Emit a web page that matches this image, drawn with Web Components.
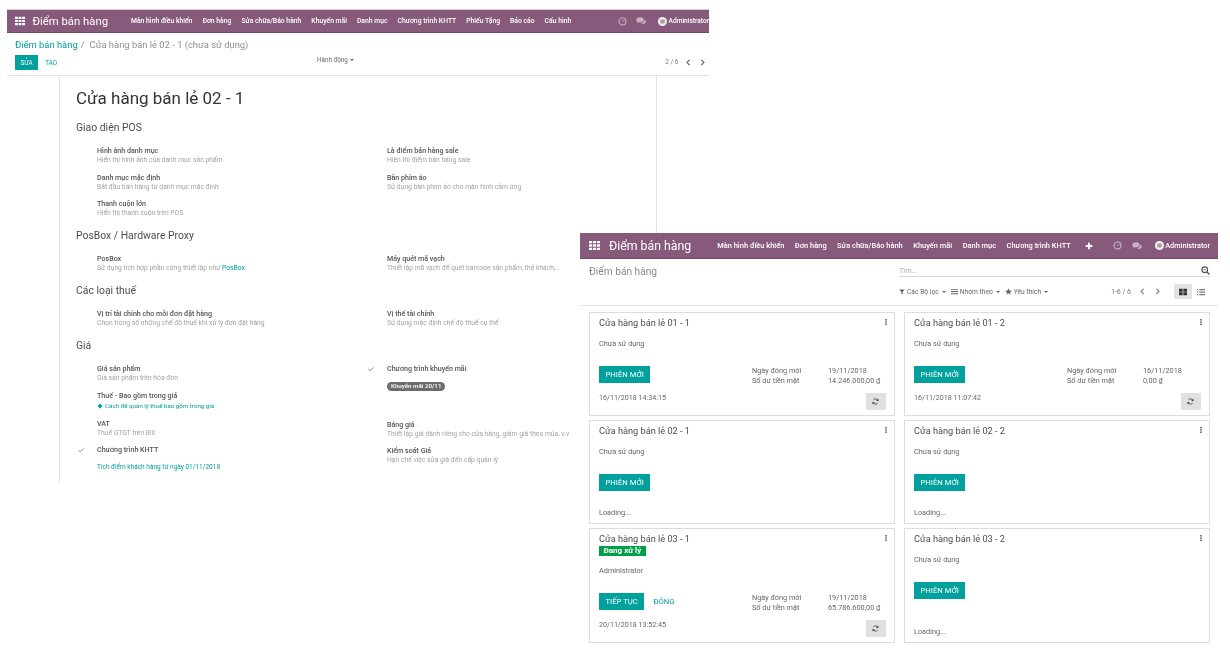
<!DOCTYPE html>
<html lang="vi">
<head>
<meta charset="utf-8">
<title>Điểm bán hàng</title>
<style>
  html, body { margin:0; height:100%; background:#fff; overflow:hidden; font-family: Roboto, "Liberation Sans", sans-serif; color:#4c4c4c; }
  body { position:relative; }
  /* deux fenêtres posées sur un canevas libre */
  pos-form-view { position:absolute; left:7px; top:9px; width:702px; height:474px; }
  pos-kanban-view { position:absolute; left:580px; top:233px; width:638px; height:418px; }
</style>
</head>
<body>
<pos-form-view></pos-form-view>
<pos-kanban-view></pos-kanban-view>

<script>
const ICONS = {
  apps: '<path d="M0 0h3.4v2.6H0zM4.3 0h3.4v2.6H4.3zM8.6 0H12v2.6H8.6zM0 3.7h3.4v2.6H0zM4.3 3.7h3.4v2.6H4.3zM8.6 3.7H12v2.6H8.6zM0 7.4h3.4V10H0zM4.3 7.4h3.4V10H4.3zM8.6 7.4H12V10H8.6z" fill="currentColor"/>',
  clock: '<circle cx="6" cy="6" r="4.6" fill="none" stroke="currentColor" stroke-width="1.5"/><path d="M6 6.4l2.2-2.4" stroke="currentColor" stroke-width="1.2" fill="none"/>',
  chat: '<path d="M4.8 1.5C2.2 1.5.3 2.9.3 4.6c0 1 .6 1.8 1.6 2.4L1.2 8.6l2.2-1.2c.5.1.9.1 1.4.1 2.6 0 4.5-1.3 4.5-3S7.4 1.5 4.8 1.5z" fill="currentColor"/><path d="M10 4.2c.1.2.1.3.1.5 0 2-2 3.5-4.7 3.7.6.6 1.6.9 2.7.9.3 0 .6 0 .9-.1l1.7 1-.4-1.4c.9-.5 1.4-1.2 1.4-2 0-1.1-.7-2-1.7-2.6z" fill="currentColor"/>',
  avatar: '<circle cx="6" cy="6" r="6" fill="currentColor"/><rect x="3" y="3.4" width="6" height="5.2" rx="1" fill="#a99aa6"/>',
  plus: '<path d="M4.5 1h3v3.500h3.500v3H7.500V11h-3V7.500H1v-3h3.500z" fill="currentColor"/>',
  left: '<path d="M8 1.500L3.500 6 8 10.500" fill="none" stroke="currentColor" stroke-width="1.800"/>',
  right: '<path d="M4 1.500L8.500 6 4 10.500" fill="none" stroke="currentColor" stroke-width="1.800"/>',
  search: '<circle cx="5" cy="5" r="3.800" fill="none" stroke="currentColor" stroke-width="1.600"/><path d="M7.800 7.800L11.200 11.200" stroke="currentColor" stroke-width="1.900"/><path d="M3 5h4" stroke="currentColor" stroke-width="1"/>',
  funnel: '<path d="M.5 1h11L7.300 6v5L4.700 9.500V6z" fill="currentColor"/>',
  bars: '<path d="M0 1.500h12v1.500H0zM0 5.200h12v1.500H0zM0 9h12v1.500H0z" fill="currentColor"/>',
  star: '<path d="M6 .5l1.700 3.700 4 .4-3 2.700.9 4L6 9.200l-3.600 2.100.9-4-3-2.700 4-.4z" fill="currentColor"/>',
  kanban: '<path d="M0 1h5.500v4.500H0zM6.500 1H12v4.500H6.500zM0 6.500h5.500V11H0zM6.500 6.500H12V11H6.500z" fill="currentColor"/>',
  list: '<path d="M0 1.500h2v1.800H0zM3.500 1.500H12v1.800H3.500zM0 5.200h2V7H0zM3.500 5.200H12V7H3.500zM0 9h2v1.800H0zM3.500 9H12v1.800H3.500z" fill="currentColor"/>',
  kebab: '<path d="M4.500 0h3v2.800h-3zM4.500 4.500h3v2.800h-3zM4.500 9h3v2.800h-3z" fill="currentColor"/>',
  refresh: '<path d="M10.200 4.600A4.500 4.500 0 0 0 2.300 3.300M1.800 7.400a4.500 4.500 0 0 0 7.900 1.300" fill="none" stroke="currentColor" stroke-width="1.500"/><path d="M11 1v4H7zM1 11V7h4z" fill="currentColor"/>',
  check: '<path d="M1 6.500l3.200 3L11 3" fill="none" stroke="currentColor" stroke-width="2"/>',
  bullet: '<path d="M6 1l5 5-5 5-5-5z" fill="currentColor"/>'
};

class PosIcon extends HTMLElement {
  connectedCallback() {
    const size = this.getAttribute("size") || 10;
    const sh = this.shadowRoot || this.attachShadow({ mode: "open" });
    sh.innerHTML = `<style>:host { display:inline-flex; flex:0 0 auto; line-height:0; } svg { display:block; }</style>
      <svg width="${size}" height="${size}" viewBox="0 0 12 ${this.getAttribute("name") === "apps" ? 10 : 12}" aria-hidden="true">${ICONS[this.getAttribute("name")] || ""}</svg>`;
  }
}

class PosNavbar extends HTMLElement {
  connectedCallback() {
    const menu = (this.getAttribute("menu") || "").split("|");
    const sh = this.shadowRoot || this.attachShadow({ mode: "open" });
    sh.innerHTML = `<style>
      :host { display:flex; align-items:center; height:var(--bar-h, 23px); background:#875a7b; color:#fff; white-space:nowrap;
        overflow:hidden; border-bottom:1px solid #6f4b66; box-sizing:border-box; padding-left:var(--bar-pad, 8px); }
      .brand { font-size:var(--brand-size, 11.300px); margin-left:var(--brand-gap, 7.500px); }
      nav { display:flex; gap:var(--item-gap, 10px); margin-left:var(--nav-gap, 23px); font-size:var(--item-size, 6.800px); font-weight:500; }
      .plus { margin-left:var(--plus-gap, 14px); }
      .tray { display:flex; align-items:center; margin-left:auto; font-size:var(--tray-size, 6.600px); font-weight:500; }
      .dim { color:rgba(255,255,255,.55); }
      .clock { margin-right:var(--tray-gap, 8.500px); }
      .chat { margin-right:var(--tray-gap2, 12.500px); }
      .ava { margin-right:1.500px; color:#f3f0f2; }
    </style>
    <pos-icon name="apps" size="${this.getAttribute("apps") || 10}"></pos-icon>
    <span class="brand">${this.getAttribute("brand")}</span>
    <nav>${menu.map((m) => `<span>${m}</span>`).join("")}</nav>
    ${this.hasAttribute("plus") ? '<pos-icon class="plus" name="plus" size="8"></pos-icon>' : ""}
    <span class="tray">
      <pos-icon class="dim clock" name="clock" size="9"></pos-icon>
      <pos-icon class="dim chat" name="chat" size="10"></pos-icon>
      <pos-icon class="ava" name="avatar" size="9"></pos-icon>
      <span>Administrator</span>
    </span>`;
  }
}

class PosButton extends HTMLElement {
  connectedCallback() {
    const sh = this.shadowRoot || this.attachShadow({ mode: "open" });
    sh.innerHTML = `<style>
      :host { display:inline-flex; align-items:center; justify-content:center; box-sizing:border-box; height:var(--btn-h, 17px); padding:0 var(--btn-pad, 6.500px);
        font-size:var(--btn-size, 7.700px); background:#00a09d; color:#fff; white-space:nowrap; flex:0 0 auto; }
      :host([link]) { background:transparent; color:#00a09d; }
    </style><slot></slot>`;
  }
}

class PosSetting extends HTMLElement {
  connectedCallback() {
    const help = this.getAttribute("help");
    const sh = this.shadowRoot || this.attachShadow({ mode: "open" });
    sh.innerHTML = `<style>
      :host { display:block; position:relative; padding-left:21px; min-height:19px; margin-bottom:7.500px; font-size:6.750px; line-height:9px; }
      .label { font-size:7.100px; font-weight:500; color:#555; white-space:nowrap; }
      .help { color:#a3a3a3; white-space:nowrap; margin-top:1px; }
      .mark { position:absolute; left:2px; top:1.500px; color:#8a8a8a; }
      ::slotted(*) { color:#a3a3a3; }
    </style>
    ${this.hasAttribute("checked") ? '<pos-icon class="mark" name="check" size="6"></pos-icon>' : ""}
    <div class="label">${this.getAttribute("label")}</div>
    ${help ? `<div class="help">${help}</div>` : ""}
    <slot></slot>`;
  }
}

class PosSection extends HTMLElement {
  connectedCallback() {
    const sh = this.shadowRoot || this.attachShadow({ mode: "open" });
    sh.innerHTML = `<style>
      :host { display:block; margin-top:3.700px; }
      h2 { margin:0 0 10.800px; font-size:10.400px; line-height:14px; font-weight:400; color:#4c4c4c; }
      .cols { display:grid; grid-template-columns:290px 1fr; }
    </style>
    <h2>${this.getAttribute("heading")}</h2>
    <div class="cols"><div><slot name="left"></slot></div><div><slot name="right"></slot></div></div>`;
  }
}

class PosFormView extends HTMLElement {
  connectedCallback() {
    const sh = this.shadowRoot || this.attachShadow({ mode: "open" });
    sh.innerHTML = `<style>
      :host { display:flex; flex-direction:column; background:#fff; overflow:hidden; border-top:1px solid #cfcfcf; box-sizing:border-box; filter:blur(.4px); }
      pos-navbar { flex:0 0 auto; }
      .cp { flex:0 0 43px; box-sizing:border-box; border-bottom:1px solid #e2e2e2; padding:5px 3.500px 0 8px; display:grid; grid-template-columns:302px auto 1fr; grid-template-rows:13px 15px; row-gap:4px; }
      .crumb { grid-column:1 / -1; font-size:9.400px; line-height:13px; color:#8f8f8f; white-space:nowrap; }
      .crumb a { color:#00a09d; text-decoration:none; }
      .crumb i { font-style:normal; margin:0 5px 0 3px; }
      .btns { display:flex; align-items:center; gap:7px; --btn-h:15px; --btn-size:6.300px; --btn-pad:5.500px; }
      .btns pos-button[link] { --btn-pad:0; }
      .act { font-size:6.300px; color:#666; align-self:start; line-height:10px; }
      .caret { display:inline-block; border:2.200px solid transparent; border-top-color:currentColor; border-bottom:0; vertical-align:middle; margin-left:2px; }
      .pager { display:flex; align-items:center; justify-content:flex-end; gap:6.500px; font-size:6.500px; color:#777; margin-top:-1px; }
      .pager pos-icon { color:#555; }
      .body { flex:1; display:flex; min-height:0; margin-left:52px; }
      .sheet { width:598px; box-sizing:border-box; border-left:1px solid #e2e2e2; border-right:1px solid #e2e2e2; padding:11px 0 0 16px; overflow:hidden; }
      h1 { margin:0 0 12.300px; font-size:17px; line-height:22px; font-weight:400; color:#333; white-space:nowrap; }
      .tip { display:flex; align-items:center; gap:2px; color:#00a09d; font-size:6.200px; line-height:11px; position:relative; top:1px; white-space:nowrap; }
      .tip pos-icon { color:#00a09d; }
      .badge { display:inline-block; margin-top:9px; background:#6c6c6c; color:#fff; border-radius:5px; font-size:6.200px; font-weight:500; line-height:8.500px; padding:0 4px; white-space:nowrap; }
      .promo { margin-top:9px; color:#00a09d; white-space:nowrap; font-size:6.500px; }
    </style>
    <pos-navbar brand="Điểm bán hàng" menu="Màn hình điều khiển|Đơn hàng|Sửa chữa/Bảo hành|Khuyến mãi|Danh mục|Chương trình KHTT|Phiếu Tặng|Báo cáo|Cấu hình"></pos-navbar>
    <div class="cp">
      <div class="crumb"><a href="#">Điểm bán hàng</a><i>/</i>Cửa hàng bán lẻ 02 - 1 (chưa sử dụng)</div>
      <div class="btns"><pos-button>SỬA</pos-button><pos-button link>TẠO</pos-button></div>
      <div class="act">Hành động<span class="caret"></span></div>
      <div class="pager"><span>2 / 6</span><pos-icon name="left" size="7"></pos-icon><pos-icon name="right" size="7"></pos-icon></div>
    </div>
    <div class="body"><div class="sheet">
      <h1>Cửa hàng bán lẻ 02 - 1</h1>
      <pos-section heading="Giao diện POS">
        <pos-setting slot="left" label="Hình ảnh danh mục" help="Hiển thị hình ảnh của danh mục sản phẩm"></pos-setting>
        <pos-setting slot="left" label="Danh mục mặc định" help="Bắt đầu bán hàng từ danh mục mặc định"></pos-setting>
        <pos-setting slot="left" label="Thanh cuộn lớn" help="Hiển thị thanh cuộn trên POS"></pos-setting>
        <pos-setting slot="right" label="Là điểm bán hàng sale" help="Hiện thị điểm bán hàng sale"></pos-setting>
        <pos-setting slot="right" label="Bàn phím ảo" help="Sử dụng bàn phím ảo cho màn hình cảm ứng"></pos-setting>
      </pos-section>
      <pos-section heading="PosBox / Hardware Proxy">
        <pos-setting slot="left" label="PosBox" help="Sử dụng tích hợp phần cứng thiết lập như <span style='color:#00a09d'>PosBox</span>"></pos-setting>
        <pos-setting slot="right" label="Máy quét mã vạch" help="Thiết lập mã vạch để quét barcode sản phẩm, thẻ khách,.."></pos-setting>
      </pos-section>
      <pos-section heading="Các loại thuế">
        <pos-setting slot="left" label="Vị trí tài chính cho mỗi đơn đặt hàng" help="Chọn trong số những chế độ thuế khi xử lý đơn đặt hàng"></pos-setting>
        <pos-setting slot="right" label="Vị thế tài chính" help="Sử dụng mặc định chế độ thuế cụ thể"></pos-setting>
      </pos-section>
      <pos-section heading="Giá">
        <pos-setting slot="left" label="Giá sản phẩm" help="Giá sản phẩm trên hóa đơn"></pos-setting>
        <pos-setting slot="left" label="Thuế - Bao gồm trong giá" style="margin-top:1px;margin-bottom:8px"><div class="tip"><pos-icon name="bullet" size="6"></pos-icon>Cách để quản lý thuế bao gồm trong giá</div></pos-setting>
        <pos-setting slot="left" label="VAT" help="Thuế GTGT trên Bill"></pos-setting>
        <pos-setting slot="left" checked label="Chương trình KHTT"><div class="promo">Tích điểm khách hàng từ ngày 01/11/2018</div></pos-setting>
        <pos-setting slot="right" checked label="Chương trình khuyến mãi" style="min-height:48px"><span class="badge">Khuyến mãi 20/11</span></pos-setting>
        <pos-setting slot="right" label="Bảng giá" help="Thiết lập giá dành riêng cho cửa hàng, giảm giá theo mùa, v.v"></pos-setting>
        <pos-setting slot="right" label="Kiểm soát Giá" help="Hạn chế việc sửa giá đến cấp quản lý"></pos-setting>
      </pos-section>
    </div></div>`;
  }
}

class PosCard extends HTMLElement {
  connectedCallback() {
    const a = (n) => this.getAttribute(n);
    const stats = a("opened")
      ? `<div class="stats"><span>Ngày đóng mới</span><span>${a("opened")}</span><span>Số dư tiền mặt</span><span>${a("cash")}</span></div>` : "";
    const foot = a("stamp")
      ? `<span class="stamp">${a("stamp")}</span><span class="sync"><pos-icon name="refresh" size="7"></pos-icon></span>`
      : `<span class="stamp loading">Loading...</span>`;
    const sh = this.shadowRoot || this.attachShadow({ mode: "open" });
    sh.innerHTML = `<style>
      :host { display:flex; flex-direction:column; position:relative; box-sizing:border-box; border:1px solid #dcdcdc; padding:4px 8.500px 5px 9px; font-size:7.300px; color:#666; background:#fff; }
      .title { font-size:9.200px; line-height:12px; color:#4c4c4c; white-space:nowrap; }
      .more { position:absolute; top:6px; right:5.500px; color:#555; }
      .tag { align-self:flex-start; background:#00a04a; color:#fff; font-size:8px; font-weight:700; line-height:10px; padding:0 4.500px; margin-top:1px; white-space:nowrap; }
      .who { margin-top:10px; line-height:10px; }
      .row { display:flex; align-items:flex-start; position:relative; margin-top:17px; }
      .stats { position:absolute; left:153px; top:0; display:grid; grid-template-columns:76px auto; line-height:10px; white-space:nowrap; }
      .foot { margin-top:auto; display:flex; justify-content:space-between; align-items:flex-start; }
      .stamp { line-height:10px; font-size:7.100px; }
      .loading { font-size:7.300px; }
      .sync { display:flex; align-items:center; justify-content:center; width:20px; height:17px; background:#e0e0e0; color:#444; }
      .close { --btn-pad:0; margin-left:9px; }
    </style>
    <div class="title">${a("name")}</div>
    <pos-icon class="more" name="kebab" size="6"></pos-icon>
    ${a("tag") ? `<span class="tag">${a("tag")}</span>` : ""}
    <div class="who">${a("who") || "Chưa sử dụng"}</div>
    <div class="row">
      <pos-button>${a("action") || "PHIÊN MỚI"}</pos-button>
      ${a("action") ? '<pos-button class="close" link>ĐÓNG</pos-button>' : ""}
      ${stats}
    </div>
    <div class="foot">${foot}</div>`;
  }
}

class PosKanbanView extends HTMLElement {
  connectedCallback() {
    const sh = this.shadowRoot || this.attachShadow({ mode: "open" });
    sh.innerHTML = `<style>
      :host { display:flex; flex-direction:column; background:#fff; overflow:hidden; filter:blur(.4px); }
      pos-navbar { --bar-h:26px; --bar-pad:9px; --brand-size:12.300px; --brand-gap:9px; --item-size:7.450px; --tray-size:7.300px; --nav-gap:26px; --item-gap:10.500px; --plus-gap:14px; --tray-gap:9.500px; --tray-gap2:13px; padding-right:8px; flex:0 0 auto; }
      .cp { flex:0 0 47px; box-sizing:border-box; border-bottom:1px solid #e2e2e2; padding:5px 8px 0 9px; display:grid; grid-template-columns:310px 1fr; grid-template-rows:18px 23px; font-size:6.700px; color:#777; }
      .crumb { font-size:10.200px; line-height:15px; color:#8a8a8a; white-space:nowrap; }
      .search { display:flex; justify-content:space-between; align-items:center; border-bottom:1px solid #d8d8d8; color:#aaa; height:12px; font-size:7.300px; }
      .search pos-icon { color:#555; }
      .filters { grid-column:2; display:flex; align-items:center; padding-top:2px; color:#666; height:15px; }
      .f { display:inline-flex; align-items:center; gap:2px; margin-right:5px; }
      .caret { display:inline-block; border:2.200px solid transparent; border-top-color:currentColor; border-bottom:0; margin-left:1px; }
      .pager { margin-left:auto; display:flex; align-items:center; color:#777; font-size:7px; }
      .pager .nav { display:flex; gap:8px; margin:0 13.500px 0 7.500px; color:#777; }
      .view { display:flex; align-items:center; justify-content:center; width:18px; height:15px; }
      .view.on { background:#e2e2e2; color:#333; }
      .grid { flex:1; display:grid; grid-template-columns:306px 306px; grid-template-rows:104px 104px 115px; gap:4px 9px; padding:6px 0 0 9px; align-content:start; }
    </style>
    <pos-navbar brand="Điểm bán hàng" plus apps="11" menu="Màn hình điều khiển|Đơn hàng|Sửa chữa/Bảo hành|Khuyến mãi|Danh mục|Chương trình KHTT"></pos-navbar>
    <div class="cp">
      <div class="crumb">Điểm bán hàng</div>
      <div class="search"><span>Tìm...</span><pos-icon name="search" size="9"></pos-icon></div>
      <div class="filters">
        <span class="f"><pos-icon name="funnel" size="6"></pos-icon>Các Bộ lọc<i class="caret"></i></span>
        <span class="f"><pos-icon name="bars" size="7"></pos-icon>Nhóm theo<i class="caret"></i></span>
        <span class="f"><pos-icon name="star" size="7"></pos-icon>Yêu thích<i class="caret"></i></span>
        <span class="pager"><span>1-6 / 6</span><span class="nav"><pos-icon name="left" size="7"></pos-icon><pos-icon name="right" size="7"></pos-icon></span>
          <span class="view on"><pos-icon name="kanban" size="8"></pos-icon></span><span class="view"><pos-icon name="list" size="8"></pos-icon></span></span>
      </div>
    </div>
    <div class="grid">
      <pos-card name="Cửa hàng bán lẻ 01 - 1" opened="19/11/2018" cash="14.246.000,00 ₫" stamp="16/11/2018 14:34:15"></pos-card>
      <pos-card name="Cửa hàng bán lẻ 01 - 2" opened="16/11/2018" cash="0,00 ₫" stamp="16/11/2018 11:07:42"></pos-card>
      <pos-card name="Cửa hàng bán lẻ 02 - 1"></pos-card>
      <pos-card name="Cửa hàng bán lẻ 02 - 2"></pos-card>
      <pos-card name="Cửa hàng bán lẻ 03 - 1" tag="Đang xử lý" who="Administrator" action="TIẾP TỤC" opened="19/11/2018" cash="65.786.600,00 ₫" stamp="20/11/2018 13:52:45"></pos-card>
      <pos-card name="Cửa hàng bán lẻ 03 - 2"></pos-card>
    </div>`;
  }
}

customElements.define("pos-icon", PosIcon);
customElements.define("pos-navbar", PosNavbar);
customElements.define("pos-button", PosButton);
customElements.define("pos-setting", PosSetting);
customElements.define("pos-section", PosSection);
customElements.define("pos-card", PosCard);
customElements.define("pos-form-view", PosFormView);
customElements.define("pos-kanban-view", PosKanbanView);
</script>
</body>
</html>
